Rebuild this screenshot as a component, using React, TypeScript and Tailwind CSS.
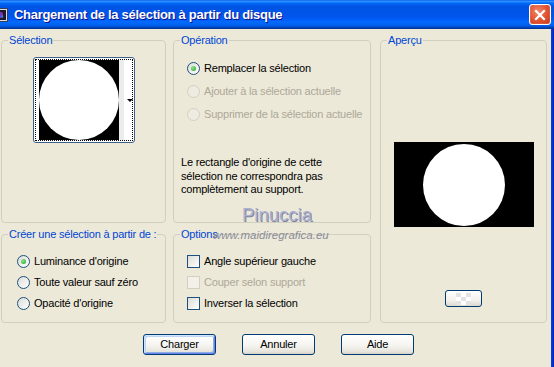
import React from 'react'

type Props = { label: string; className?: string; children?: React.ReactNode }

// XP style group box: thin rounded border with a blue caption sitting on the top line
const GroupBox = ({ label, className = '', children }: Props) => (
  <div className={`relative rounded-[4px] border border-[#d0d0bf] ${className}`}>
    <span className="absolute -top-[7px] left-[6px] bg-[#ece9d8] px-[1px] leading-[13px] text-[#0046d5]">
      {label}
    </span>
    {children}
  </div>
)

const Radio = ({ checked = false, disabled = false }: { checked?: boolean; disabled?: boolean }) => (
  <span
    className={`flex h-[13px] w-[13px] shrink-0 items-center justify-center rounded-full border ${
      disabled
        ? 'border-[#d3d0c3] bg-[#eeebe0]'
        : 'border-[#1c5180] bg-[linear-gradient(135deg,#dcdcd7,#ffffff)]'
    }`}
  >
    {checked && (
      <span className="h-[5px] w-[5px] rounded-full bg-[radial-gradient(circle_at_35%_35%,#8ee68e,#21a121)]" />
    )}
  </span>
)

const Check = ({ disabled = false }: { disabled?: boolean }) => (
  <span
    className={`h-[13px] w-[13px] shrink-0 border ${
      disabled
        ? 'border-[#d3d0c3] bg-[#f2f0e8]'
        : 'border-[#1c5180] bg-[linear-gradient(135deg,#dcdcd7,#ffffff)]'
    }`}
  />
)

const XpButton = ({ label, primary = false }: { label: string; primary?: boolean }) => (
  <button
    className={`h-[21px] w-[73px] rounded-[3px] border border-[#003c74] bg-[linear-gradient(to_bottom,#ffffff,#f5f4f0_55%,#e6e4dc_88%,#d6d0c5)] text-[11px] text-black ${
      primary
        ? 'shadow-[inset_1px_1px_0_#cee7ff,inset_-1px_-1px_0_#6982ee,inset_2px_2px_0_#bcd4f6,inset_-2px_-2px_0_#89ade4]'
        : ''
    }`}
  >
    {label}
  </button>
)

const App = () => {
  return (
    <div className="relative h-[367px] w-[554px] overflow-hidden bg-[#ece9d8] font-['Liberation_Sans',Arial,sans-serif] text-[11px] leading-[13px] tracking-[-0.2px] text-black">
      {/* Title bar */}
      <div className="flex h-[29px] items-center bg-[linear-gradient(to_bottom,#0058ee_0%,#3593ff_4%,#288eff_6%,#127dff_8%,#036ffc_10%,#0262ee_14%,#0057e5_20%,#0054e3_24%,#0055eb_56%,#005bf5_66%,#026afe_76%,#0062ef_86%,#0052d6_92%,#0040ab_96%,#003092_100%)]">
        <svg width="16" height="16" viewBox="0 0 16 16" className="-ml-[8px] shrink-0">
          <rect x="0.5" y="1.5" width="15" height="13" fill="#d8dce8" stroke="#3a3f58" />
          <rect x="2" y="3" width="12" height="10" fill="#1a1a2a" />
          <circle cx="8" cy="8" r="3.2" fill="#7a2fb0" />
          <circle cx="6.5" cy="7" r="1.6" fill="#2fb04a" />
          <circle cx="10" cy="9.5" r="1.3" fill="#2c7be5" />
        </svg>
        <span className="ml-[6px] text-[13px] font-bold tracking-[-0.3px] text-white [text-shadow:1px_1px_0_#0f1089]">
          Chargement de la sélection à partir du disque
        </span>
        <button className="ml-auto mr-[3px] flex h-[21px] w-[22px] items-center justify-center rounded-[3px] border border-white bg-[radial-gradient(circle_at_40%_35%,#f08a6c,#e0512f_55%,#c5391c)] shadow-[inset_0_0_1px_#ffffff]">
          <svg width="12" height="12" viewBox="0 0 12 12">
            <path d="M2 2 L10 10 M10 2 L2 10" stroke="#ffffff" strokeWidth="2.2" strokeLinecap="square" />
          </svg>
        </button>
      </div>

      {/* Body */}
      <div className="flex h-[338px]">
        <div className="w-[551px] pl-[1px] pt-[11px]">
          <div className="flex">
            {/* Left column */}
            <div className="flex w-[165px] flex-col gap-[11px]">
              <GroupBox label="Sélection" className="h-[183px]">
                <div className="flex justify-center pt-[16px]">
                  <div className="relative h-[86px] w-[102px] rounded-[3px] border border-[#3c5e8a] bg-white p-[1px]">
                    <div className="flex h-full w-full border border-dotted border-black pl-[3px]">
                      <div className="flex h-[80px] w-[80px] items-center justify-center bg-black">
                        <div className="h-[80px] w-[80px] rounded-full bg-white" />
                      </div>
                      <div className="h-full w-[5px] bg-[#ececec]" />
                    </div>
                    <svg width="6" height="4" viewBox="0 0 6 4" className="absolute left-[93px] top-[41px]">
                      <path d="M0 0 L6 0 L3 3 Z" fill="#000000" />
                    </svg>
                  </div>
                </div>
              </GroupBox>

              <GroupBox label="Créer une sélection à partir de :" className="h-[89px]">
                <div className="flex flex-col pl-[15px] pt-[16px]">
                  <div className="flex h-[21px] items-center gap-[4px]">
                    <Radio checked />
                    <span>Luminance d'origine</span>
                  </div>
                  <div className="flex h-[21px] items-center gap-[4px]">
                    <Radio />
                    <span>Toute valeur sauf zéro</span>
                  </div>
                  <div className="flex h-[21px] items-center gap-[4px]">
                    <Radio />
                    <span>Opacité d'origine</span>
                  </div>
                </div>
              </GroupBox>
            </div>

            {/* Middle column */}
            <div className="ml-[7px] flex w-[198px] flex-col gap-[11px]">
              <GroupBox label="Opération" className="h-[183px]">
                <div className="flex flex-col pl-[13px] pt-[16px]">
                  <div className="flex h-[23px] items-center gap-[4px]">
                    <Radio checked />
                    <span>Remplacer la sélection</span>
                  </div>
                  <div className="flex h-[23px] items-center gap-[4px] text-[#aca899]">
                    <Radio disabled />
                    <span>Ajouter à la sélection actuelle</span>
                  </div>
                  <div className="flex h-[23px] items-center gap-[4px] text-[#aca899]">
                    <Radio disabled />
                    <span>Supprimer de la sélection actuelle</span>
                  </div>
                </div>
                <p className="ml-[7px] mt-[30px] leading-[13.5px]">
                  Le rectangle d'origine de cette
                  <br />
                  sélection ne correspondra pas
                  <br />
                  complètement au support.
                </p>
              </GroupBox>

              <GroupBox label="Options" className="h-[89px]">
                <div className="flex flex-col pl-[13px] pt-[16px]">
                  <div className="flex h-[21px] items-center gap-[4px]">
                    <Check />
                    <span>Angle supérieur gauche</span>
                  </div>
                  <div className="flex h-[21px] items-center gap-[4px] text-[#aca899]">
                    <Check disabled />
                    <span>Couper selon support</span>
                  </div>
                  <div className="flex h-[21px] items-center gap-[4px]">
                    <Check />
                    <span>Inverser la sélection</span>
                  </div>
                </div>
              </GroupBox>
            </div>

            {/* Right column */}
            <GroupBox label="Aperçu" className="ml-[9px] h-[283px] w-[167px]">
              <div className="flex flex-col items-center pt-[101px]">
                <div className="flex h-[85px] w-[140px] items-center justify-center bg-black">
                  <div className="h-[82px] w-[82px] rounded-full bg-white" />
                </div>
                <button className="mt-[63px] flex h-[17px] w-[37px] items-center justify-center rounded-[3px] border border-[#003c74] bg-[linear-gradient(to_bottom,#ffffff,#f3f2ee_60%,#dcd8cd)]">
                  <svg width="15" height="12" viewBox="0 0 15 12">
                    <rect x="0" y="0" width="15" height="12" fill="#ffffff" />
                    <rect x="0" y="0" width="5" height="4" fill="#e3e3e3" />
                    <rect x="10" y="0" width="5" height="4" fill="#e3e3e3" />
                    <rect x="5" y="4" width="5" height="4" fill="#e3e3e3" />
                    <rect x="0" y="8" width="5" height="4" fill="#e3e3e3" />
                    <rect x="10" y="8" width="5" height="4" fill="#e3e3e3" />
                  </svg>
                </button>
              </div>
            </GroupBox>
          </div>

          {/* Dialog buttons */}
          <div className="ml-[142px] mt-[11px] flex gap-[26px]">
            <XpButton label="Charger" primary />
            <XpButton label="Annuler" />
            <XpButton label="Aide" />
          </div>
        </div>
        <div className="w-[3px] bg-[linear-gradient(to_right,#0a3fd8,#0831d9_50%,#001ea0)]" />
      </div>

      {/* Watermark */}
      <span className="absolute left-[242px] top-[206px] text-[18.5px] leading-none tracking-[0px] text-[#adb0cf] [text-shadow:1px_1px_0_#80849f]">
        Pinuccia
      </span>
      <span className="absolute left-[213px] top-[229px] text-[11.5px] italic leading-[13px] tracking-[0px] text-[#8a8b99]">
        www.maidiregrafica.eu
      </span>
    </div>
  )
}

export default App
